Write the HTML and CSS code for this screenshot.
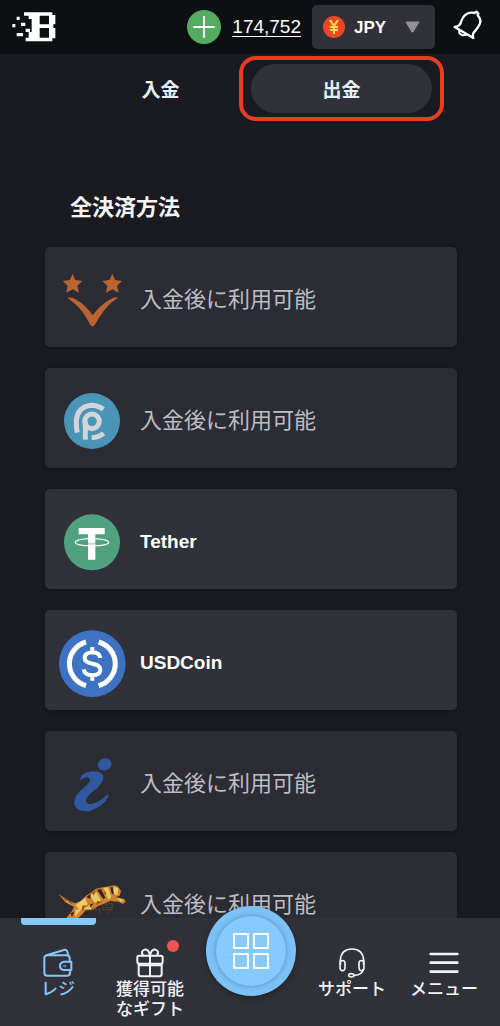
FILE: index.html
```html
<!DOCTYPE html>
<html lang="ja">
<head>
    <meta charset="UTF-8">
    <meta name="viewport" content="width=device-width, initial-scale=1.0">
    <title>出金</title>
    <link rel="stylesheet" href="styles.css">
</head>
<body>
    <div class="app">
        <header class="header">
            <a class="logo" href="#" aria-label="B">
                <svg width="44" height="30" viewBox="36 36 132 90" fill="#fff">
                    <path d="M50 50h9v10h-9zM37 72h9v10h-9zM63 68h13v10H63zM50 99h19v10H50zM77 86h13v10H77z"/>
                    <path fill-rule="evenodd" d="M72 37h85v8h9v28h-6v11h6v31h-9v9H77v-11h9V96h9V57h-9V47H72zM119 47v26h28V47zM119 84v29h28V84z"/>
                </svg>
            </a>

            <div class="balance">
                <button class="add-btn" aria-label="+">
                    <svg width="34" height="34" viewBox="0 0 34 34">
                        <circle cx="17" cy="17" r="17" fill="#55ab62"/>
                        <path d="M17 7v20M7 17h20" stroke="#fff" stroke-width="2" stroke-linecap="round"/>
                    </svg>
                </button>
                <a class="amount" href="#">174,752</a>
                <div class="currency">
                    <svg class="currency-flag" width="22" height="22" viewBox="0 0 22 22">
                        <circle cx="11" cy="11" r="11" fill="#ee4728"/>
                        <path d="M7 4l4 6 4-6M11 10v8M7 11h8M7 14h8" fill="none" stroke="#ffe14d" stroke-width="2"/>
                    </svg>
                    <select class="currency-select" aria-label="JPY">
                        <option>JPY</option>
                    </select>
                    <svg class="currency-arrow" width="15" height="12" viewBox="0 0 15 12">
                        <path d="M1 1h13L8 11H7z" fill="#919195" stroke="#919195" stroke-linejoin="round"/>
                    </svg>
                </div>
                <button class="bell-btn" aria-label="bell">
                    <svg width="32" height="34" viewBox="12 13 96 102" fill="none" stroke="#fff" stroke-width="7" stroke-linejoin="round" stroke-linecap="round">
                        <path d="M20 64Q36 62 39 49Q47 23 68 21Q75 20 79 22L85 18L91 24L89 29Q101 42 95 56Q89 68 80 77Q72 84 76 97Z"/>
                        <path d="M34 73Q31 84 42 88Q50 90 56 86" stroke-width="6"/>
                    </svg>
                </button>
            </div>
        </header>

        <main class="content">
            <div class="tabs">
                <button class="tab">入金</button>
                <button class="tab active">出金</button>
            </div>

            <h1>全決済方法</h1>

            <div class="methods">
                <button class="method locked">
                    <svg class="method-icon" viewBox="57 260 201 201" fill="#ba642f">
                        <path d="M98 281l8 18 21 3-15 14 5 21-19-10-19 10 4-21-15-14 21-3zM217 281l8 18 21 3-15 14 5 21-19-10-19 10 4-21-15-14 21-3z"/>
                        <path d="M83 352Q92 349 107 357Q137 374 158 405Q180 374 212 356Q226 349 234 352Q226 358 216 365Q190 388 164 434Q158 442 151 434Q128 386 97 364Q90 359 83 352Z"/>
                    </svg>
                    <span>入金後に利用可能</span>
                </button>
                <button class="method locked">
                    <svg class="method-icon" viewBox="57 83 201 201" fill="none" stroke="#d3d4d8" stroke-width="15">
                        <circle cx="156" cy="182" r="84" fill="#4a95b6" stroke="none"/>
                        <path d="M190 147Q174 135 154 135Q112 140 109 182Q108 202 112 217"/>
                        <circle cx="156" cy="183" r="22"/>
                        <path d="M136 238V183"/>
                        <path d="M155 232Q176 231 191 219"/>
                    </svg>
                    <span>入金後に利用可能</span>
                </button>
                <button class="method">
                    <svg class="method-icon" viewBox="57 86 201 201">
                        <circle cx="156" cy="186" r="84" fill="#50a17f"/>
                        <path d="M116 143h78v19h-28v76h-22v-76h-28z" fill="#fff"/>
                        <path d="M144 175Q106 178 106 186Q108 196 156 196Q204 196 206 186Q206 178 166 175" fill="none" stroke="#fff" stroke-width="4"/>
                        <path d="M144 190Q155 192 166 190" fill="none" stroke="#50a17f" stroke-width="2"/>
                    </svg>
                    <span>Tether</span>
                </button>
                <button class="method">
                    <svg class="method-icon" viewBox="57 89 201 201" fill="none" stroke="#fff">
                        <circle cx="157" cy="190" r="100" fill="#3e73c4" stroke="none"/>
                        <path d="M138 125A68 68 0 0 0 138 256M176 125A68 68 0 0 1 176 256" stroke-width="15"/>
                        <path d="M181 173Q178 156 157 156Q134 157 134 173Q134 186 157 190Q181 194 181 208Q181 224 157 225Q134 224 131 207M157 140V156M157 225V241" stroke-width="12"/>
                    </svg>
                    <span>USDCoin</span>
                </button>
                <button class="method locked">
                    <svg class="method-icon" viewBox="57 77 201 201" fill="#31599f">
                        <ellipse cx="194" cy="117" rx="21" ry="18" transform="rotate(-20 194 117)"/>
                        <path d="M119 164Q124 140 158 138Q192 138 190 158Q188 176 160 198Q134 218 138 231Q146 242 174 229Q192 220 200 209Q207 206 204 216Q190 244 150 257Q106 262 102 232Q102 212 128 190Q152 172 150 162Q146 152 132 158Q124 163 119 164Z"/>
                    </svg>
                    <span>入金後に利用可能</span>
                </button>
                <button class="method locked">
                    <svg class="method-icon" viewBox="12 -19 201 201">
                        <path d="M11 47L39 66L60 75L77 68L91 54L112 40L123 31L144 27L163 24L178 21L188 24L198 38L194 52L182 56L208 62L212 70L204 77L190 70L165 68L146 77L128 84L114 95L92 96L82 108L52 134H22L51 98L57 86L31 72Z" fill="#cf8130"/>
                        <path d="M62 80L90 59L98 77L75 96ZM103 51L125 42L138 67L120 73ZM145 29L159 27L169 56L160 64ZM175 25L190 29L188 51L177 47ZM61 95L80 91L60 116ZM31 66L50 76L45 78ZM184 58L205 65L199 72ZM84 93L104 80L110 92Z" fill="#e6cc63"/>
                        <path d="M94 56L107 47L106 62ZM126 35L138 32L151 58L145 62ZM166 27L173 26L176 48L170 46ZM106 78L117 75L104 88ZM41 67L53 77L44 74ZM47 105L58 99L51 117Z" fill="#30251f"/>
                        <path d="M112 43L122 38L116 52ZM148 35L155 47L149 49ZM81 83L93 80L82 99ZM126 67L141 71L124 80ZM26 57L37 66L31 68Z" fill="#a54c22"/>
                        <path d="M108 95L123 89L120 98L136 91L132 108M142 83L145 96L172 92L157 109M148 80L170 74L173 87L149 87" fill="none" stroke="#60512b" stroke-width="2"/>
                    </svg>
                    <span>入金後に利用可能</span>
                </button>
            </div>
        </main>

        <nav class="bottom-nav">
            <a class="nav-item active" href="#">
                <svg width="30" height="30" viewBox="127 323 90 90" fill="none" stroke="currentColor" stroke-width="6" stroke-linejoin="round" stroke-linecap="round">
                    <path d="M207 363V354Q207 345 197 345H140Q131 345 131 354V397Q131 406 140 406H199Q208 406 208 397V389"/>
                    <path d="M140 344L190 329Q201 326 202 344M208 364H190Q178 366 178 377Q178 388 190 389H212V364Z"/>
                    <circle cx="192" cy="377" r="1"/>
                </svg>
                <span>レジ</span>
            </a>
            <a class="nav-item" href="#">
                <svg width="30" height="30" viewBox="403 323 90 90" fill="none" stroke="currentColor" stroke-width="6" stroke-linejoin="round">
                    <path d="M415 346H481Q486 346 486 351V364Q486 370 480 370H416Q410 370 410 364V351Q410 346 415 346Z"/>
                    <path d="M414 370V401Q414 408 421 408H476Q483 408 483 401V370M448 346V408M414 375H483"/>
                    <path d="M448 346Q445 326 432 328Q419 332 427 346M448 346Q451 326 464 328Q477 332 469 346"/>
                </svg>
                <span>獲得可能<br>なギフト</span>
                <i class="dot"></i>
            </a>
            <button class="nav-main" aria-label="grid">
                <span class="nav-main-inner">
                    <svg width="38" height="38" viewBox="0 0 38 38" fill="none" stroke="#fff" stroke-width="2" stroke-linejoin="round">
                        <path d="M2 2h14v14H2zM22 2h14v14H22zM2 22h14v14H2zM22 22h14v14H22z"/>
                    </svg>
                </span>
            </button>
            <a class="nav-item" href="#">
                <svg width="30" height="30" viewBox="263 323 90 90" fill="none" stroke="currentColor" stroke-width="5" stroke-linejoin="round">
                    <path d="M273 373V360Q275 326 308 326Q341 326 343 360V373"/>
                    <path d="M273 362Q286 358 287 368V383Q286 393 276 390Q272 388 272 382ZM343 362Q330 358 329 368V383Q330 393 340 390Q344 388 344 382Z"/>
                    <path d="M342 386Q340 404 314 405"/>
                    <ellipse cx="306" cy="405" rx="8" ry="5"/>
                </svg>
                <span>サポート</span>
            </a>
            <a class="nav-item" href="#">
                <svg width="30" height="30" viewBox="539 323 90 90" fill="none" stroke="currentColor" stroke-width="8" stroke-linecap="round">
                    <path d="M544 341H624M544 367H624M544 394H624"/>
                </svg>
                <span>メニュー</span>
            </a>
        </nav>
    </div>
</body>
</html>
```

FILE: styles.css
```css
:root {
    --color-bg: #1a1b20;
    --color-header: #0d1012;
    --color-panel: #31313a;
    --color-locked: #2c2c35;
    --color-accent: #86c9fc;
    --color-outline: #e93c22;
    --color-light: #f3f4f7;
}

* {
    box-sizing: border-box;
}

body {
    margin: 0;
    font-family: "Liberation Sans", "Noto Sans CJK JP", sans-serif;
    background: var(--color-bg);
    color: var(--color-light);
}

button {
    padding: 0;
    border: none;
    background: none;
    color: inherit;
    font-family: inherit;
    cursor: pointer;
}

svg {
    display: block;
    flex-shrink: 0;
}

.app {
    display: flex;
    flex-direction: column;
    height: 100vh;
}

/* Header */
.header {
    display: flex;
    justify-content: space-between;
    align-items: center;
    padding: 5px 16px 5px 12px;
    background: var(--color-header);
}

.balance {
    display: flex;
    align-items: center;
}

.amount {
    margin: 0 11px;
    color: white;
    font-size: 19px;
    text-decoration: underline;
    text-underline-offset: 3px;
}

.currency {
    display: flex;
    align-items: center;
    position: relative;
    width: 123px;
    height: 44px;
    margin-right: 17px;
    border-radius: 5px;
    background: var(--color-panel);
}

.currency-flag,
.currency-arrow {
    position: absolute;
    pointer-events: none;
}

.currency-flag {
    left: 11px;
}

.currency-arrow {
    right: 15px;
}

.currency-select {
    width: 100%;
    height: 100%;
    padding: 0 32px 0 42px;
    border: none;
    appearance: none;
    background: transparent;
    color: white;
    font-family: inherit;
    font-size: 17px;
    font-weight: 700;
}

/* Content */
.content {
    flex: 1;
    min-height: 0;
    padding: 10px 43px 0 45px;
    overflow-y: auto;
    scrollbar-width: none;
}

.tabs {
    display: flex;
    padding: 0 25px;
}

.tab {
    position: relative;
    flex: 1;
    height: 49px;
    border-radius: 25px;
    color: #e4f0fa;
    font-size: 19px;
    font-weight: 700;
}

.tab.active {
    background: var(--color-panel);
}

.tab.active::after {
    content: "";
    position: absolute;
    inset: -8px -12px;
    border: 4px solid var(--color-outline);
    border-radius: 17px;
}

h1 {
    margin: 80px 25px 24px;
    font-size: 22px;
    line-height: 30px;
}

.methods {
    display: flex;
    flex-direction: column;
    gap: 21px;
}

.method {
    display: flex;
    flex-shrink: 0;
    align-items: center;
    gap: 14px;
    height: 100px;
    padding: 6px 14px 0;
    border-radius: 5px;
    background: var(--color-panel);
    box-shadow: 0 1px 4px rgba(0, 0, 0, 0.3);
    color: white;
    font-size: 19px;
    font-weight: 700;
}

.method.locked {
    background: var(--color-locked);
    color: #bebec2;
    font-size: 22px;
    font-weight: 400;
}

.method.locked span {
    padding-bottom: 6px;
}

.method-icon {
    width: 67px;
    height: 67px;
}

/* Bottom navigation */
.bottom-nav {
    display: grid;
    grid-template-columns: 1fr 1fr 110px 1fr 1fr;
    position: relative;
    height: 108px;
    padding: 0 10px 0 12px;
    background: var(--color-panel);
}

.nav-item {
    display: flex;
    flex-direction: column;
    align-items: center;
    gap: 2px;
    position: relative;
    padding-top: 30px;
    color: var(--color-light);
    font-size: 17px;
    font-weight: 500;
    line-height: 20px;
    text-align: center;
    text-decoration: none;
    white-space: nowrap;
}

.nav-item.active {
    color: var(--color-accent);
}

.nav-item.active::before {
    content: "";
    position: absolute;
    top: 0;
    width: 75px;
    height: 7px;
    border-radius: 0 0 4px 4px;
    background: var(--color-accent);
}

.dot {
    position: absolute;
    top: 22px;
    right: 17px;
    width: 12px;
    height: 12px;
    border-radius: 50%;
    background: #ee5550;
}

.nav-main {
    justify-self: center;
    width: 90px;
    height: 90px;
    margin-top: -12px;
    padding: 10px;
    border-radius: 50%;
    background: #7dc2f7;
    box-shadow: 0 2px 6px rgba(0, 0, 0, 0.35);
}

.nav-main-inner {
    display: flex;
    justify-content: center;
    align-items: center;
    height: 100%;
    border-radius: 50%;
    background: var(--color-accent);
    box-shadow: 0 0 5px rgba(30, 80, 125, 0.45);
}
```
